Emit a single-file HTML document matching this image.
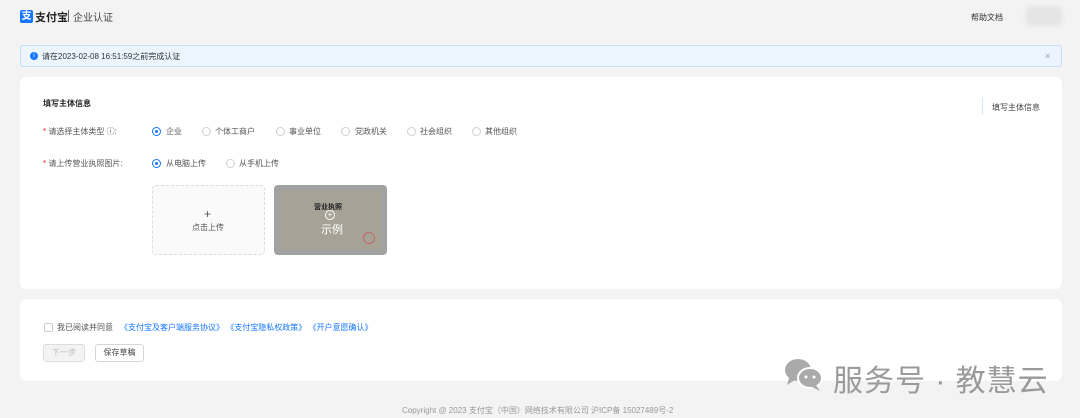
<!DOCTYPE html>
<html><head><meta charset="utf-8"><style>
*{margin:0;padding:0;box-sizing:border-box}
body{width:1080px;height:418px;background:#f3f3f3;font-family:"Liberation Sans","Noto Sans CJK SC",sans-serif;font-size:8px;color:#333;position:relative;overflow:hidden}
.a{position:absolute;white-space:nowrap}
.radio{position:absolute;width:9px;height:9px;border:1px solid #d0d0d0;border-radius:50%;background:#fff}
.radio.on{border-color:#1677ff}
.radio.on::after{content:"";position:absolute;left:2px;top:2px;width:3px;height:3px;border-radius:50%;background:#1677ff}
.opt{color:#555}
</style></head><body>
<div class="a" style="left:20px;top:10px;width:13px;height:13px;background:#1677ff;border-radius:2px;color:#fff;font-size:10px;line-height:13px;text-align:center;font-weight:bold">支</div>
<div class="a" style="left:35px;top:9px;font-size:11px;font-weight:bold;color:#222">支付宝</div>
<div class="a" style="left:68px;top:10px;width:1px;height:12px;background:#666"></div>
<div class="a" style="left:73px;top:9px;font-size:10px;color:#444">企业认证</div>
<div class="a" style="left:971px;top:12px;font-size:8px;color:#333">帮助文档</div>
<div class="a" style="left:1026px;top:6px;width:36px;height:20px;background:#e4e4e4;border-radius:4px;filter:blur(2px)"></div>

<div class="a" style="left:20px;top:45px;width:1042px;height:22px;background:#ecf4fe;border:1px solid #c8ddf8;border-radius:3px"></div>
<div class="a" style="left:30px;top:52px;width:8px;height:8px;border-radius:50%;background:#1677ff;color:#fff;font-size:6px;line-height:8px;text-align:center">i</div>
<div class="a" style="left:42px;top:51px;font-size:8px;color:#333">请在2023-02-08 16:51:59之前完成认证</div>
<div class="a" style="left:1045px;top:51px;font-size:9px;color:#999">×</div>

<div class="a" style="left:20px;top:77px;width:1042px;height:212px;background:#fff;border-radius:6px"></div>
<div class="a" style="left:43px;top:98px;font-size:8px;font-weight:bold;color:#222">填写主体信息</div>
<div class="a" style="left:982px;top:98px;width:1px;height:17px;background:#d6e4fb"></div>
<div class="a" style="left:992px;top:102px;font-size:8px;color:#444">填写主体信息</div>

<div class="a" style="left:43px;top:126px;font-size:8px;color:#555"><span style="color:#f5222d">*</span> 请选择主体类型 ⓘ:</div>
<div class="radio on" style="left:152px;top:127px"></div><div class="a opt" style="left:166px;top:126px">企业</div>
<div class="radio" style="left:202px;top:127px"></div><div class="a opt" style="left:215px;top:126px">个体工商户</div>
<div class="radio" style="left:276px;top:127px"></div><div class="a opt" style="left:289px;top:126px">事业单位</div>
<div class="radio" style="left:341px;top:127px"></div><div class="a opt" style="left:355px;top:126px">党政机关</div>
<div class="radio" style="left:407px;top:127px"></div><div class="a opt" style="left:420px;top:126px">社会组织</div>
<div class="radio" style="left:472px;top:127px"></div><div class="a opt" style="left:485px;top:126px">其他组织</div>

<div class="a" style="left:43px;top:158px;font-size:8px;color:#555"><span style="color:#f5222d">*</span> 请上传营业执照图片:</div>
<div class="radio on" style="left:152px;top:159px"></div><div class="a opt" style="left:166px;top:158px">从电脑上传</div>
<div class="radio" style="left:226px;top:159px"></div><div class="a opt" style="left:239px;top:158px">从手机上传</div>

<div class="a" style="left:152px;top:185px;width:113px;height:70px;background:#fafafa;border:1px dashed #ddd;border-radius:4px"></div>
<div class="a" style="left:204px;top:207px;font-size:12px;color:#555">+</div>
<div class="a" style="left:192px;top:222px;font-size:8px;color:#555">点击上传</div>
<div class="a" style="left:274px;top:185px;width:113px;height:70px;background:#a2a2a2;border-radius:4px"></div>
<div class="a" style="left:280px;top:190px;width:101px;height:60px;background:#a6a396;border-radius:2px"></div>
<div class="a" style="left:314px;top:202px;font-size:7px;color:#222;font-weight:bold">营业执照</div>
<div class="a" style="left:325px;top:210px;width:10px;height:10px;border:1px solid #fff;border-radius:50%;color:#fff;font-size:8px;line-height:8px;text-align:center">+</div>
<div class="a" style="left:321px;top:221px;font-size:11px;color:#fff">示例</div>
<div class="a" style="left:363px;top:232px;width:12px;height:12px;border:1px solid #c44;border-radius:50%;opacity:.6"></div>

<div class="a" style="left:20px;top:299px;width:1042px;height:82px;background:#fff;border-radius:6px"></div>
<div class="a" style="left:44px;top:323px;width:9px;height:9px;border:1px solid #ccc;border-radius:2px"></div>
<div class="a" style="left:57px;top:322px;font-size:8px;color:#555">我已阅读并同意</div>
<div class="a" style="left:120px;top:322px;font-size:8px;color:#1677ff">《支付宝及客户端服务协议》 《支付宝隐私权政策》 《开户意愿确认》</div>
<div class="a" style="left:43px;top:344px;width:42px;height:18px;background:#f3f3f3;border:1px solid #ddd;border-radius:3px;color:#bbb;font-size:8px;line-height:16px;text-align:center">下一步</div>
<div class="a" style="left:95px;top:344px;width:49px;height:18px;background:#fff;border:1px solid #d6d6d6;border-radius:3px;color:#444;font-size:8px;line-height:16px;text-align:center">保存草稿</div>

<svg class="a" style="left:783px;top:356px" width="42" height="36" viewBox="0 0 42 36">
<ellipse cx="15" cy="14" rx="13" ry="11" fill="#aaa"/><path d="M6 22 L4 29 L12 24Z" fill="#aaa"/>
<ellipse cx="27" cy="22" rx="12" ry="10" fill="#aaa" stroke="#fff" stroke-width="2"/><path d="M33 29 L37 35 L29 31Z" fill="#aaa"/>
<circle cx="23" cy="21" r="1.5" fill="#fff"/><circle cx="31" cy="21" r="1.5" fill="#fff"/></svg>
<div class="a" style="left:833px;top:356px;font-size:30px;color:#9a9a9a;letter-spacing:1px">服务号 · 教慧云</div>

<div class="a" style="left:402px;top:405px;font-size:8px;color:#999">Copyright @ 2023 支付宝（中国）网络技术有限公司 沪ICP备 15027489号-2</div>
</body></html>
